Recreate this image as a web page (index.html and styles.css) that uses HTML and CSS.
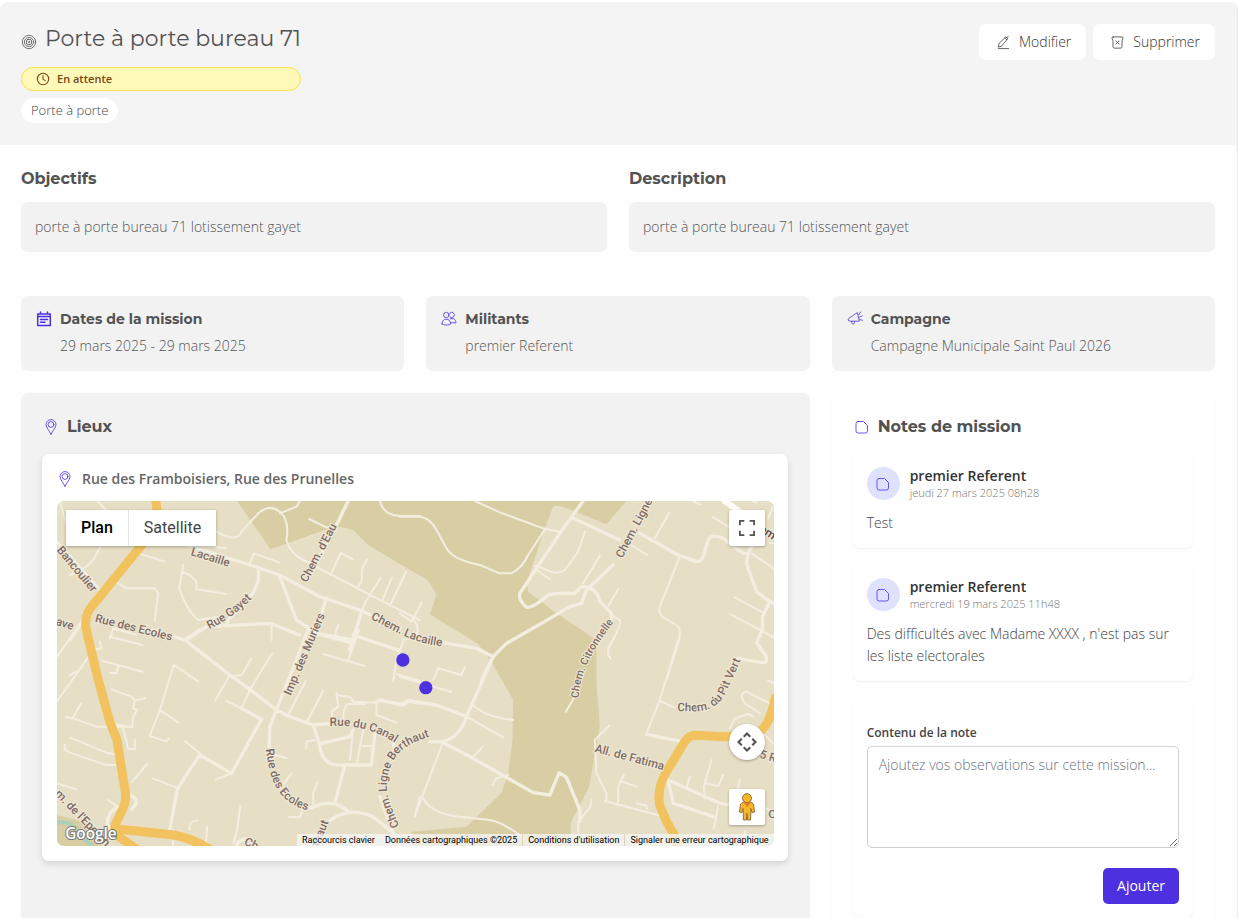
FILE: index.html
```
<!DOCTYPE html>
<html lang="fr">
<head>
  <meta charset="UTF-8">
  <meta name="viewport" content="width=device-width, initial-scale=1.0">
  <title>Porte à porte bureau 71</title>
  <link rel="stylesheet" href="styles.css">
</head>
<body>
  <!-- Shared icons -->
  <svg class="sprite" aria-hidden="true">
    <symbol id="icon-pin" viewBox="0 0 16 16">
      <path d="M8 15.2C6.8 12 3 8.8 3 5.6a5 5 0 0 1 10 0C13 8.8 9.2 12 8 15.2z"/>
      <circle cx="8" cy="5.5" r="2.9"/>
    </symbol>
    <symbol id="icon-note" viewBox="0 0 16 16">
      <path d="M4 2.5h5.5l4 4V12a2 2 0 0 1-2 2H4a2 2 0 0 1-2-2V4.500a2 2 0 0 1 2-2z"/>
    </symbol>
  </svg>

  <main class="mission">
    <header class="mission-header">
      <div class="mission-heading">
        <h1>
          <svg class="icon" viewBox="0 0 16 16"><circle cx="8" cy="8" r="6.7"/><circle cx="8" cy="8" r="4.6"/><rect x="5.500" y="5.500" width="5" height="5" rx="1.5"/><circle cx="8" cy="8" r=".5"/></svg>
          Porte à porte bureau 71
        </h1>
        <div class="status">
          <svg class="icon" viewBox="0 0 16 16"><circle cx="8" cy="8" r="6.5"/><path d="M8 4v4.200l2.600 1.600"/></svg>
          En attente
        </div>
        <span class="tag">Porte à porte</span>
      </div>
      <div class="actions">
        <button type="button" class="btn">
          <svg class="icon" viewBox="0 0 16 16"><path d="M2.500 14.500h11M2.500 12.500l.7-3.500 7.300-7 2 2-6.500 7.700zM9.500 3l2 2M11.500 3l1.700-1.800"/></svg>
          Modifier
        </button>
        <button type="button" class="btn">
          <svg class="icon" viewBox="0 0 16 16"><path d="M3.500 2h9a1.500 1.500 0 0 1 1.300 2l-1 2v6.500a1.500 1.500 0 0 1-1.500 1.500H4.700a1.500 1.500 0 0 1-1.500-1.500V6l-1-2a1.500 1.500 0 0 1 1.300-2z"/><path d="M6.300 6.300l3.400 3.400M9.700 6.300L6.300 9.700"/></svg>
          Supprimer
        </button>
      </div>
    </header>

    <div class="content">
      <div class="texts">
        <section>
          <h2>Objectifs</h2>
          <p class="text-box">porte à porte bureau 71 lotissement gayet</p>
        </section>
        <section>
          <h2>Description</h2>
          <p class="text-box">porte à porte bureau 71 lotissement gayet</p>
        </section>
      </div>

      <div class="grid">
        <section class="info">
          <svg class="icon thick" viewBox="0 0 16 16"><path d="M1.700 3h12.600v11.500H1.700zM1.700 5.500h12.600M4.500 1v2M11.500 1v2M4.500 8.500h7M4.500 11.200h4.500"/></svg>
          <div>
            <h3>Dates de la mission</h3>
            <p>29 mars 2025 - 29 mars 2025</p>
          </div>
        </section>
        <section class="info">
          <svg class="icon" viewBox="0 0 16 16"><circle cx="5.300" cy="4" r="2.700"/><path d="M8.500 2.300a2.700 2.700 0 1 1 .5 3.800M1 13c0-3 1.700-4.800 4.300-4.800S9.500 10 9.500 13c0 1.300-8.500 1.300-8.500 0zM9 7.800c3-1 6 .6 6 4h-5.500"/></svg>
          <div>
            <h3>Militants</h3>
            <p>premier Referent</p>
          </div>
        </section>
        <section class="info">
          <svg class="icon" viewBox="0 0 16 16"><path d="M10 1.800L2 7.200a1.600 1.600 0 0 0 .8 3l9.200 0zM4.700 10.400v1.200a1.400 1.400 0 0 0 2.800 0v-1.200M12 3.500l1.500-2.500M12.500 6l2.700-1M12.700 8.500l2.600.8"/></svg>
          <div>
            <h3>Campagne</h3>
            <p>Campagne Municipale Saint Paul 2026</p>
          </div>
        </section>

        <section class="places">
          <h2 class="panel-title"><svg class="icon"><use href="#icon-pin"/></svg>Lieux</h2>
          <div class="place">
            <div class="address"><svg class="icon"><use href="#icon-pin"/></svg>Rue des Framboisiers, Rue des Prunelles</div>
            <div class="map">
              <svg class="map-canvas" viewBox="0 0 2151 1035" preserveAspectRatio="xMidYMid slice">
                <defs>
                  <path id="l-gayet" d="M568 718C620 692 650 670 705 618"/>
                  <path id="l-ecoles" d="M738 358C750 440 765 520 876 544"/>
                  <path id="l-canal" d="M930 288C1000 284 1060 296 1128 340"/>
                  <path id="l-ligne" d="M1138 588C1100 500 1090 470 1112 410S1190 325 1310 300"/>
                  <path id="l-lacaille" d="M1052 688C1110 710 1170 762 1268 768"/>
                  <path id="l-citron" d="M536 775C540 700 575 630 650 535"/>
                  <path id="l-vert" d="M832 213C900 216 950 220 982 150L1025 55"/>
                </defs>
                <!-- Woods -->
                <path class="wood" transform="translate(1029 -183)" d="M-488 183L-388 328-225 270-180 260-140 270-95 315 0 372 75 415Q90 425 110 465L90 523 235 612 275 665 340 780 338 900 325 1000 305 1058 200 1160 36 1175V1217H512V1150L568 1040 600 860 590 730V600L470 520 385 455 380 430 435 265 460 200Q468 192 515 210L620 253 680 183z"/>
                <path class="wood" transform="translate(-111 387)" d="M111 555L180 572 225 605 270 648H111z"/>
                <path class="river" transform="translate(-111 387)" d="M111 577C150 573 160 588 175 607S205 640 220 648"/>
                <!-- North west -->
                <g class="roads" transform="translate(-111 -333)">
                  <path class="thin" d="M235 333L265 370M120 333L145 420M241 470Q225 510 200 530L150 555M355 490L435 515M590 425Q650 460 665 425L715 370Q750 340 780 365T800 450Q810 490 850 510L1090 635 1200 690M780 370L830 350 840 333M868 387L915 410 950 420M1080 333Q1090 375 1140 378H1200M490 525L487 545 510 555 530 575V598L620 612M487 545L478 595Q500 660 535 690L600 680M288 575L320 595H405L415 610 405 692M690 520L703 490 778 517M932 556L963 488 1000 508M1043 508L1027 535 1025 575 1010 595M1082 563L1035 640 1025 665M1116 563L1088 630M1158 546L1110 648M520 465L620 475M755 705V750M955 705L940 750M270 745L280 715 350 735"/>
                  <path d="M500 465L700 528 780 555 900 620 1020 660 1140 715M985 333L950 405 870 560M780 560L830 690 890 730 1000 750M920 625L880 750M716 540V570L700 610 625 690 620 705M500 750L560 710 750 700 840 735M240 600L110 455M190 690L150 750M1025 665L990 780"/>
                </g>
                <!-- South west -->
                <g class="roads" transform="translate(-111 387)">
                  <path class="thin" d="M111 80L165 5M210 75L111 215M150 135L170 125M240 35L245 55 215 60M270 20L368 45M248 92L368 125M270 128L290 130 295 105M275 178L335 200 345 212 375 205M345 212L340 235 352 240 340 260 337 292 270 280M138 262L160 265 230 290H330M184 220L160 262M310 295L325 357H345V330M152 323L265 370 290 372M135 345Q130 360 150 368L260 405H295M382 402L335 457M462 105L420 240 390 318 440 334 448 325M462 105L536 155M420 240L475 277M495 333L540 370M695 85L665 135 627 140 587 210M757 70L690 180 665 235M620 213L665 235M635 430L588 448M398 445L470 473M662 527L650 610 640 640M510 600Q505 570 535 572M562 590L558 647M460 600V647M860 355V335L885 330M880 535L880 490 893 455M808 560L840 562 850 535M815 430L790 465M745 370L800 384M858 152L805 255M910 182L860 278M912 73L1033 107M1010 20L985 92M1150 35L1130 90 1120 155M1130 132L1200 153M950 190L955 230 935 245 940 275M950 195L990 200 1000 215 1070 218M1000 300L990 390M1030 300L1010 405M1028 348H1060M970 280Q970 225 985 222H1038M1070 220V255L1130 278M265 510L300 535M1200 500L1185 560M111 460L170 478"/>
                  <path d="M495 30L540 0M400 0L495 30 630 135 690 178 770 240 805 258 880 285 935 280M865 0L770 240 750 290 748 350M665 235L725 268 635 430 540 375Q500 430 472 480L450 600M880 285L900 345Q905 410 970 405H1055L1065 310M905 340L990 320 1000 300M975 405L945 520M870 535Q940 500 985 545M900 600Q970 520 1060 560L1120 610M1120 610L1080 500M1120 330L1125 375M890 10L1000 40 1015 0M1000 15L1140 62M1070 215L1080 210 1150 225 1170 212 1200 220M650 647Q655 625 690 625M300 530Q265 540 262 580L280 620M330 495Q365 510 335 538"/>
                </g>
                <!-- North east -->
                <g class="roads" transform="translate(1029 -183)">
                  <path class="thin" d="M0 230H60Q90 232 110 270L140 325Q160 360 240 375L300 400H335Q370 380 385 345L435 268M225 183L300 217 430 265 480 275M555 275L535 335 495 390Q470 410 420 380L405 378M410 390L450 417M600 347L550 430M690 312L742 345M808 218L765 295M938 230L985 260M880 183L900 193M655 448L625 498M840 350L780 500Q775 520 790 532L830 555Q845 565 838 600L800 720M635 525L660 540Q668 550 625 625V645L632 655M1005 472L1090 518M993 523L1090 575 1122 592M1055 340L1122 385M1120 200L1105 235M1122 310L1110 308M65 488L35 545 0 520M38 540Q60 550 50 590L10 600M18 398L0 435M1060 183L1070 188"/>
                  <path d="M550 183L480 280 360 460Q355 480 380 502Q400 505 445 465Q470 458 525 460L545 440Q590 440 600 485L635 520V545M520 235L660 300 M720 280L835 345 890 365Q905 365 912 345L925 300Q935 280 970 295L1030 340H1045L1040 370 1070 455 1110 485 1088 530V570L1070 608 1100 650Q1100 670 1090 668L1010 655M1110 485L1122 490M1045 340L1060 310M640 375L560 450 545 490 510 500 430 547 320 610 280 650 245 720M130 608L230 625 280 650"/>
                  <path class="wide" d="M975 183L1040 230"/>
                </g>
                <!-- South east -->
                <g class="roads" transform="translate(1029 417)">
                  <path class="thin" d="M0 110L155 156M100 120L115 85 185 105 195 82M215 190Q250 230 340 240M200 230L310 292M130 305L45 528M70 475Q100 530 210 533L270 540Q305 545 370 592M215 355L247 322M325 405L290 415 278 435M525 170L498 215M835 0L780 180 740 280M780 183L825 203M628 257L585 300 590 400 620 460V480M575 478L572 500 540 540M655 485V440L672 405M660 423L712 440M615 483L775 525M710 490L740 497V507M870 410L860 445M935 360L912 440 915 475M915 430L955 438 970 405M1020 420L1010 470M955 500L942 565M1080 220L1035 190Q1015 160 1040 155L1110 190M990 265L1005 235 1045 222 1060 230M1105 122L1122 130M1035 575V590M535 545V580L540 590M1090 500L1110 512M1090 280L1120 310"/>
                  <path d="M280 50L200 230Q180 290 130 305H90M0 195L25 183 110 195 200 230M130 308L215 352 400 458 450 465 478 398 500 412 540 510V545M740 283L860 308M805 420L960 490 1090 510M805 420L820 490 940 530"/>
                </g>
                <!-- Main road -->
                <g class="highway">
                  <path d="M297 0L302 40Q300 80 240 150L110 310Q80 340 88 385L120 520 150 630Q158 665 180 715L205 870Q212 900 190 940L178 965Q165 990 190 1010L240 1045"/>
                  <path d="M185 985L240 990 350 1002Q400 1010 460 1045"/>
                  <path d="M2155 590Q2135 700 2080 702L2000 707 1915 703Q1895 704 1882 725L1830 810Q1800 860 1808 910 1830 970 1852 1000L1860 1040"/>
                </g>
                <g class="road-names">
                  <text transform="translate(-2 148) rotate(50)">Bancoulier</text>
                  <text transform="translate(400 162) rotate(17)">Lacaille</text>
                  <text transform="translate(750 246) rotate(-62)">Chem. d'Eau</text>
                  <text transform="translate(-28 365) rotate(16)">Gave</text>
                  <text transform="translate(113 362) rotate(14)">Rue des Ecoles</text>
                  <text transform="translate(702 585) rotate(-67)">Imp. des Muriers</text>
                  <text transform="translate(1696 173) rotate(-62)">Chem. Ligne</text>
                  <text class="dark" transform="translate(2070 68) rotate(32)">Chem</text>
                  <text transform="translate(1612 752) rotate(15)">All. de Fatima</text>
                  <text transform="translate(2066 757) rotate(17)">D55 R</text>
                  <text transform="translate(2134 950)">C</text>
                  <text transform="translate(-7 880) rotate(46)">m. de l'Eperon</text>
                  <text transform="translate(560 1030) rotate(25)">Ch</text>
                  <text transform="translate(765 1088) rotate(-68)">Berthaut</text>
                  <g transform="translate(-111 -333)">
                    <text><textPath href="#l-gayet">Rue Gayet</textPath></text>
                    <text><textPath href="#l-lacaille">Chem. Lacaille</textPath></text>
                  </g>
                  <g transform="translate(-111 387)">
                    <text><textPath href="#l-ecoles">Rue des Ecoles</textPath></text>
                    <text><textPath href="#l-canal">Rue du Canal</textPath></text>
                    <text><textPath href="#l-ligne">Chem. Ligne Berthaut</textPath></text>
                  </g>
                  <text class="small" transform="translate(1029 -183)"><textPath href="#l-citron">Chem. Citronnelle</textPath></text>
                  <text transform="translate(1029 417)"><textPath href="#l-vert">Chem. du Pit Vert</textPath></text>
                </g>
                <circle class="marker" cx="1038" cy="477" r="20"/>
                <circle class="marker" cx="1107" cy="560" r="20"/>
                <text class="map-logo" x="25" y="1013">Google</text>
              </svg>
              <div class="map-types">
                <button type="button" class="active">Plan</button>
                <button type="button">Satellite</button>
              </div>
              <button type="button" class="map-btn fullscreen" aria-label="Plein écran">
                <svg viewBox="0 0 18 18"><path d="M0 0h6v2H2v4H0zM12 0h6v6h-2V2h-4zM0 12h2v4h4v2H0zM16 12h2v6h-6v-2h4z"/></svg>
              </button>
              <div class="map-side">
                <button type="button" class="map-btn round" aria-label="Commandes de la caméra">
                  <svg viewBox="0 0 22 22"><path d="M11 1l4 4-1.500 1.500L11 4 8.500 6.500 7 5zM11 21l4-4-1.500-1.500L11 18l-2.500-2.500L7 17zM1 11l4-4 1.500 1.500L4 11l2.500 2.500L5 15zM21 11l-4-4-1.500 1.500L18 11l-2.500 2.500L17 15z"/></svg>
                </button>
                <button type="button" class="map-btn" aria-label="Street View">
                  <svg class="pegman" viewBox="0 0 16 28"><path d="M4.500 9h7l3 2 1 8-2.500.5-1-4-.5 11.500H8.600L8 20l-.6 7H4.500L4 15.500l-1 4L.5 19l1-8z"/><circle cx="8" cy="5.200" r="4.500"/><path class="scarf" d="M4.500 9.500h7L8.500 14z"/></svg>
                </button>
              </div>
              <div class="map-legal">
                <button type="button">Raccourcis clavier</button>
                <span>Données cartographiques ©2025</span>
                <a href="#">Conditions d'utilisation</a>
                <a href="#">Signaler une erreur cartographique</a>
              </div>
            </div>
          </div>
        </section>

        <section class="notes">
          <h2 class="panel-title"><svg class="icon"><use href="#icon-note"/></svg>Notes de mission</h2>
          <article class="note">
            <div class="note-head">
              <span class="avatar"><svg class="icon"><use href="#icon-note"/></svg></span>
              <div>
                <strong>premier Referent</strong>
                <time>jeudi 27 mars 2025 08h28</time>
              </div>
            </div>
            <p>Test</p>
          </article>
          <article class="note">
            <div class="note-head">
              <span class="avatar"><svg class="icon"><use href="#icon-note"/></svg></span>
              <div>
                <strong>premier Referent</strong>
                <time>mercredi 19 mars 2025 11h48</time>
              </div>
            </div>
            <p>Des difficultés avec Madame XXXX , n'est pas sur les liste electorales</p>
          </article>
          <form class="note note-form">
            <label for="note">Contenu de la note</label>
            <textarea id="note" placeholder="Ajoutez vos observations sur cette mission..."></textarea>
            <button type="button" class="btn-primary">Ajouter</button>
          </form>
        </section>
      </div>
    </div>
  </main>
</body>
</html>
```
FILE: styles.css
```
* {
  box-sizing: border-box;
}
body {
  margin: 0;
  background: #fff;
  color: #444;
  font-family: "Open Sans", sans-serif;
  font-size: 14px;
  font-weight: 300;
  line-height: 22px;
}
h1, h2, h3, p {
  margin: 0;
}
h1, h2, h3 {
  font-family: Montserrat, Inter, sans-serif;
  color: #525252;
}
button, textarea {
  font: inherit;
}
button {
  border: none;
  cursor: pointer;
}
.sprite {
  display: none;
}
.icon {
  width: 16px;
  height: 16px;
  flex: none;
  fill: none;
  stroke: currentColor;
  stroke-width: 0.8;
  stroke-linecap: round;
  stroke-linejoin: round;
}
.info .thick {
  stroke-width: 1.5;
}

/* Page */
.mission {
  height: 100vh;
  margin-top: 2px;
  overflow: hidden;
  border-right: 1px solid #e8e8e8;
  border-radius: 8px 8px 0 0;
  background: #fefefe;
}
.mission-header {
  display: flex;
  justify-content: space-between;
  align-items: flex-start;
  padding: 22px 22px 22px 21px;
  background: #f4f4f4;
}
.mission-heading {
  display: flex;
  flex-direction: column;
  align-items: flex-start;
}
h1 {
  display: flex;
  align-items: center;
  gap: 8px;
  margin-bottom: 14px;
  font-size: 22px;
  font-weight: 400;
  line-height: 29px;
}
h1 .icon {
  margin-top: 6px;
}
.status {
  display: flex;
  align-items: center;
  align-self: stretch;
  gap: 7px;
  height: 24px;
  margin-bottom: 7px;
  padding: 0 14px;
  border: 1px solid #f8e04a;
  border-radius: 12px;
  background: #fef9b9;
  color: #7c4614;
  font-size: 11px;
  font-weight: 600;
}
.status .icon {
  width: 14px;
  height: 14px;
  stroke-width: 1.2;
}
.tag {
  padding: 1px 10px 2px;
  border-radius: 13px;
  background: #fff;
  font-size: 13px;
}
.actions {
  display: flex;
  gap: 7px;
}
.btn {
  display: flex;
  align-items: center;
  gap: 8px;
  height: 36px;
  padding: 0 15px 0 17px;
  border-radius: 7px;
  background: #fff;
  color: #333;
}
.btn .icon {
  width: 15px;
  height: 15px;
}

/* Content */
.content {
  padding: 23px 22px 22px 21px;
}
h2 {
  font-size: 16px;
  font-weight: 700;
}
.texts {
  display: grid;
  grid-template-columns: 1fr 1fr;
  gap: 22px;
  margin-bottom: 44px;
}
.text-box {
  margin-top: 12px;
  padding: 14px;
  border-radius: 7px;
  background: #f2f2f2;
  color: #555;
}
.grid {
  display: grid;
  grid-template-columns: repeat(3, 1fr);
  gap: 22px;
}
.info {
  display: flex;
  gap: 8px;
  padding: 12px 15px 14px;
  border-radius: 7px;
  background: #f2f2f2;
}
.info .icon {
  margin-top: 3px;
  color: #4d30e0;
}
.info h3 {
  margin-bottom: 5px;
  font-size: 14px;
  font-weight: 700;
}
.info p {
  color: #555;
}
.panel-title {
  display: flex;
  align-items: center;
  gap: 8px;
  margin-bottom: 16px;
}
.panel-title .icon,
.address .icon {
  color: #4d30e0;
}

/* Places */
.places {
  grid-column: span 2;
  padding: 23px 22px 22px 21px;
  border-radius: 7px;
  background: #f2f2f2;
}
.place {
  padding: 14px 14px 15px 15px;
  border-radius: 7px;
  background: #fff;
  box-shadow: 0 3px 6px rgba(0, 0, 0, 0.12);
}
.places .panel-title {
  padding-left: 1px;
}
.address {
  display: flex;
  align-items: center;
  gap: 9px;
  margin-bottom: 11px;
  color: #666;
  font-weight: 600;
}
.map {
  position: relative;
  height: 345px;
  overflow: hidden;
  border-radius: 7px;
  background: #e7dfc5;
  font-family: Roboto, sans-serif;
}
.map-canvas {
  display: block;
  width: 100%;
  height: 100%;
}
.wood {
  fill: #d9cda4;
}
.river {
  fill: none;
  stroke: #abcfb9;
  stroke-width: 12;
}
.roads, .highway {
  fill: none;
  stroke: #f3eee0;
  stroke-width: 10;
  stroke-linecap: round;
  stroke-linejoin: round;
}
.thin {
  stroke-width: 6;
}
.wide {
  stroke: #fffdf5;
  stroke-width: 18;
}
.highway {
  stroke: #f1c25e;
  stroke-width: 27;
}
.road-names {
  fill: #806b63;
  stroke: #efe9d8;
  stroke-width: 6;
  paint-order: stroke;
  font-size: 35px;
  font-weight: 500;
}
.road-names .small {
  font-size: 32px;
}
.road-names .dark {
  fill: #5a453e;
}
.marker {
  fill: #4d30e0;
}
.map-logo {
  fill: #fff;
  stroke: #777;
  stroke-width: 6;
  paint-order: stroke;
  font-family: "Open Sans", sans-serif;
  font-size: 46px;
  font-weight: 600;
}
.map-types {
  position: absolute;
  top: 9px;
  left: 9px;
  display: flex;
  box-shadow: 0 1px 3px rgba(0, 0, 0, 0.3);
}
.map-types button {
  height: 36px;
  padding: 0 15px;
  background: #fff;
  color: #444;
  font-size: 16px;
  font-weight: 400;
}
.map-types .active {
  border-right: 1px solid #e6e6e6;
  color: #000;
  font-weight: 500;
}
.map-btn {
  display: flex;
  align-items: center;
  justify-content: center;
  width: 36px;
  height: 36px;
  padding: 0;
  border-radius: 2px;
  background: #fff;
  box-shadow: 0 1px 3px rgba(0, 0, 0, 0.3);
}
.map-btn svg {
  width: 16px;
  fill: #555;
}
.map-btn .pegman {
  width: 16px;
  height: 28px;
  fill: #f9b529;
  stroke: #8a7340;
  stroke-width: 1;
}
.map-btn .scarf {
  fill: #e2762b;
  stroke: none;
}
.fullscreen {
  position: absolute;
  top: 9px;
  right: 9px;
}
.map-side {
  position: absolute;
  right: 9px;
  bottom: 21px;
  display: grid;
  gap: 29px;
}
.map-side .round {
  border-radius: 50%;
}
.round svg {
  width: 22px;
}
.map-legal {
  position: absolute;
  right: 0;
  bottom: 0;
  display: flex;
  background: rgba(245, 245, 245, 0.75);
  color: #000;
  font-size: 9px;
  font-weight: 400;
  line-height: 12px;
}
.map-legal > * {
  padding: 0 5px;
  background: none;
  color: inherit;
  text-decoration: none;
}
.map-legal a {
  border-left: 1px solid #ddd6bf;
}

/* Notes */
.notes {
  padding: 23px 22px 22px 21px;
  border-radius: 7px;
  box-shadow: 0 1px 2px rgba(0, 0, 0, 0.05);
}
.notes .panel-title {
  margin-bottom: 15px;
  padding-left: 1px;
}
.note {
  margin-bottom: 16px;
  padding: 14px;
  border-radius: 7px;
  box-shadow: 0 1px 2px rgba(0, 0, 0, 0.06);
}
.note-head {
  display: flex;
  align-items: center;
  gap: 10px;
  margin-bottom: 12px;
}
.avatar {
  display: flex;
  align-items: center;
  justify-content: center;
  width: 33px;
  height: 33px;
  border-radius: 50%;
  background: #dfe2ff;
  color: #4d30e0;
}
.note strong {
  display: block;
  color: #333;
  font-weight: 600;
  line-height: 18px;
}
.note time {
  display: block;
  color: #777;
  font-size: 11px;
  line-height: 15px;
}
.note-form {
  display: flex;
  flex-direction: column;
  padding-top: 25px;
}
.note-form label {
  margin-bottom: 2px;
  font-size: 12px;
  font-weight: 600;
}
.note-form textarea {
  height: 102px;
  margin-bottom: 20px;
  padding: 7px 11px;
  border: 1px solid #d1d1d1;
  border-radius: 5px;
  background: #fff;
}
.note-form textarea::placeholder {
  color: #6b7280;
}
.btn-primary {
  align-self: flex-end;
  height: 36px;
  padding: 0 14px;
  border-radius: 5px;
  background: #4d30e0;
  color: #fff;
  font-weight: 400;
}
```
